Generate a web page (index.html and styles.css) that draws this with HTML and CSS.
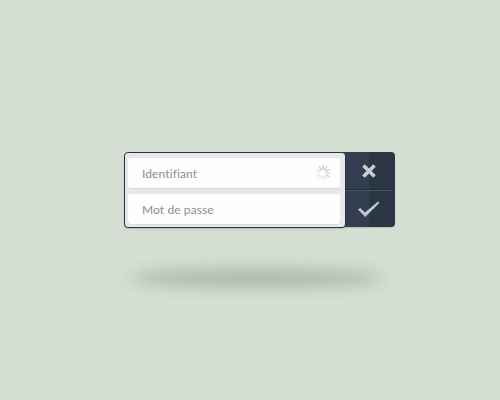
FILE: index.html
```html
<!DOCTYPE html>
<html>
<head>
<meta charset="utf-8">
<link rel="stylesheet" href="styles.css">
</head>
<body>
<div class="stage">
  <div class="login">
    <form class="fields">
      <div class="field">
        <span class="placeholder">Identifiant</span>
        <svg class="spinner" width="16" height="16" viewBox="-8 -8 16 16">
          <g stroke="#a9acb1" stroke-width="1" stroke-linecap="round">
            <line x1="0" y1="-3.5" x2="0" y2="-7" opacity="1"/>
            <line x1="0" y1="-3.5" x2="0" y2="-7" transform="rotate(30)" opacity="0.9"/>
            <line x1="0" y1="-3.5" x2="0" y2="-7" transform="rotate(60)" opacity="0.8"/>
            <line x1="0" y1="-3.5" x2="0" y2="-7" transform="rotate(90)" opacity="0.7"/>
            <line x1="0" y1="-3.5" x2="0" y2="-7" transform="rotate(120)" opacity="0.6"/>
            <line x1="0" y1="-3.5" x2="0" y2="-7" transform="rotate(150)" opacity="0.5"/>
            <line x1="0" y1="-3.5" x2="0" y2="-7" transform="rotate(180)" opacity="0.45"/>
            <line x1="0" y1="-3.5" x2="0" y2="-7" transform="rotate(210)" opacity="0.4"/>
            <line x1="0" y1="-3.5" x2="0" y2="-7" transform="rotate(240)" opacity="0.35"/>
            <line x1="0" y1="-3.5" x2="0" y2="-7" transform="rotate(270)" opacity="0.3"/>
            <line x1="0" y1="-3.5" x2="0" y2="-7" transform="rotate(300)" opacity="0.5"/>
            <line x1="0" y1="-3.5" x2="0" y2="-7" transform="rotate(330)" opacity="0.8"/>
          </g>
        </svg>
      </div>
      <div class="field">
        <span class="placeholder">Mot de passe</span>
      </div>
    </form>
    <div class="actions">
      <div class="btn">
        <svg width="16" height="16" viewBox="0 0 16 16">
          <path d="M2.5 2.5 L13.5 13.5 M13.5 2.5 L2.5 13.5" stroke="#c9ccd1" stroke-width="3.6" stroke-linecap="butt"/>
        </svg>
      </div>
      <div class="btn">
        <svg width="24" height="18" viewBox="0 0 24 18">
          <path d="M1 9.5 L3.2 8 L8 12.5 L21 1.5 L22.5 2.8 L8.2 17 Z" fill="#c3c6cb"/>
        </svg>
      </div>
    </div>
  </div>
  <div class="shadow"></div>
</div>
</body>
</html>
```
FILE: styles.css
```css
html, body {
  margin: 0;
  padding: 0;
  background: #d5dfd3;
  width: 500px;
  height: 400px;
  overflow: hidden;
}
.stage {
  padding: 152px 0 0 124px;
}
.login {
  display: flex;
  width: 271px;
  height: 76px;
}
.fields {
  position: relative;
  z-index: 2;
  box-sizing: border-box;
  width: 222px;
  height: 76px;
  margin: 0;
  padding: 5px 5px 3px 3px;
  background: #e7e8eb;
  border: 1px solid #2a3241;
  border-radius: 4px;
  display: flex;
  flex-direction: column;
  gap: 6px;
  box-shadow: 0 1px 2px rgba(0,0,0,0.15);
}
.field {
  height: 30px;
  background: #fefefe;
  border-radius: 3px;
  display: flex;
  align-items: center;
  justify-content: space-between;
  padding: 0 9px 0 14px;
  box-shadow: 0 1px 0 rgba(0,0,0,0.05);
}
.placeholder {
  font-family: Lato, "Open Sans", sans-serif;
  font-size: 12px;
  color: #8b8d91;
  letter-spacing: 0.1px;
}
.actions {
  width: 55px;
  margin-left: -6px;
  height: 75px;
  border-radius: 0 4px 4px 0;
  background: linear-gradient(to right, #333f50 0, #333f50 29px, #2c3746 29px, #2c3746 100%);
  display: flex;
  flex-direction: column;
  padding: 0 3px 0 6px;
  box-sizing: border-box;
  box-shadow: 0 1px 1px rgba(0,0,0,0.15);
}
.btn {
  flex: 1;
  display: flex;
  align-items: center;
  justify-content: center;
}
.btn:first-child {
  border-bottom: 1px solid #212a36;
  box-shadow: 0 1px 0 #4b5666;
}
.shadow {
  width: 256px;
  height: 16px;
  margin: 42px 0 0 5px;
  border-radius: 50%;
  background: rgba(120, 135, 118, 0.5);
  filter: blur(8px);
}
```
